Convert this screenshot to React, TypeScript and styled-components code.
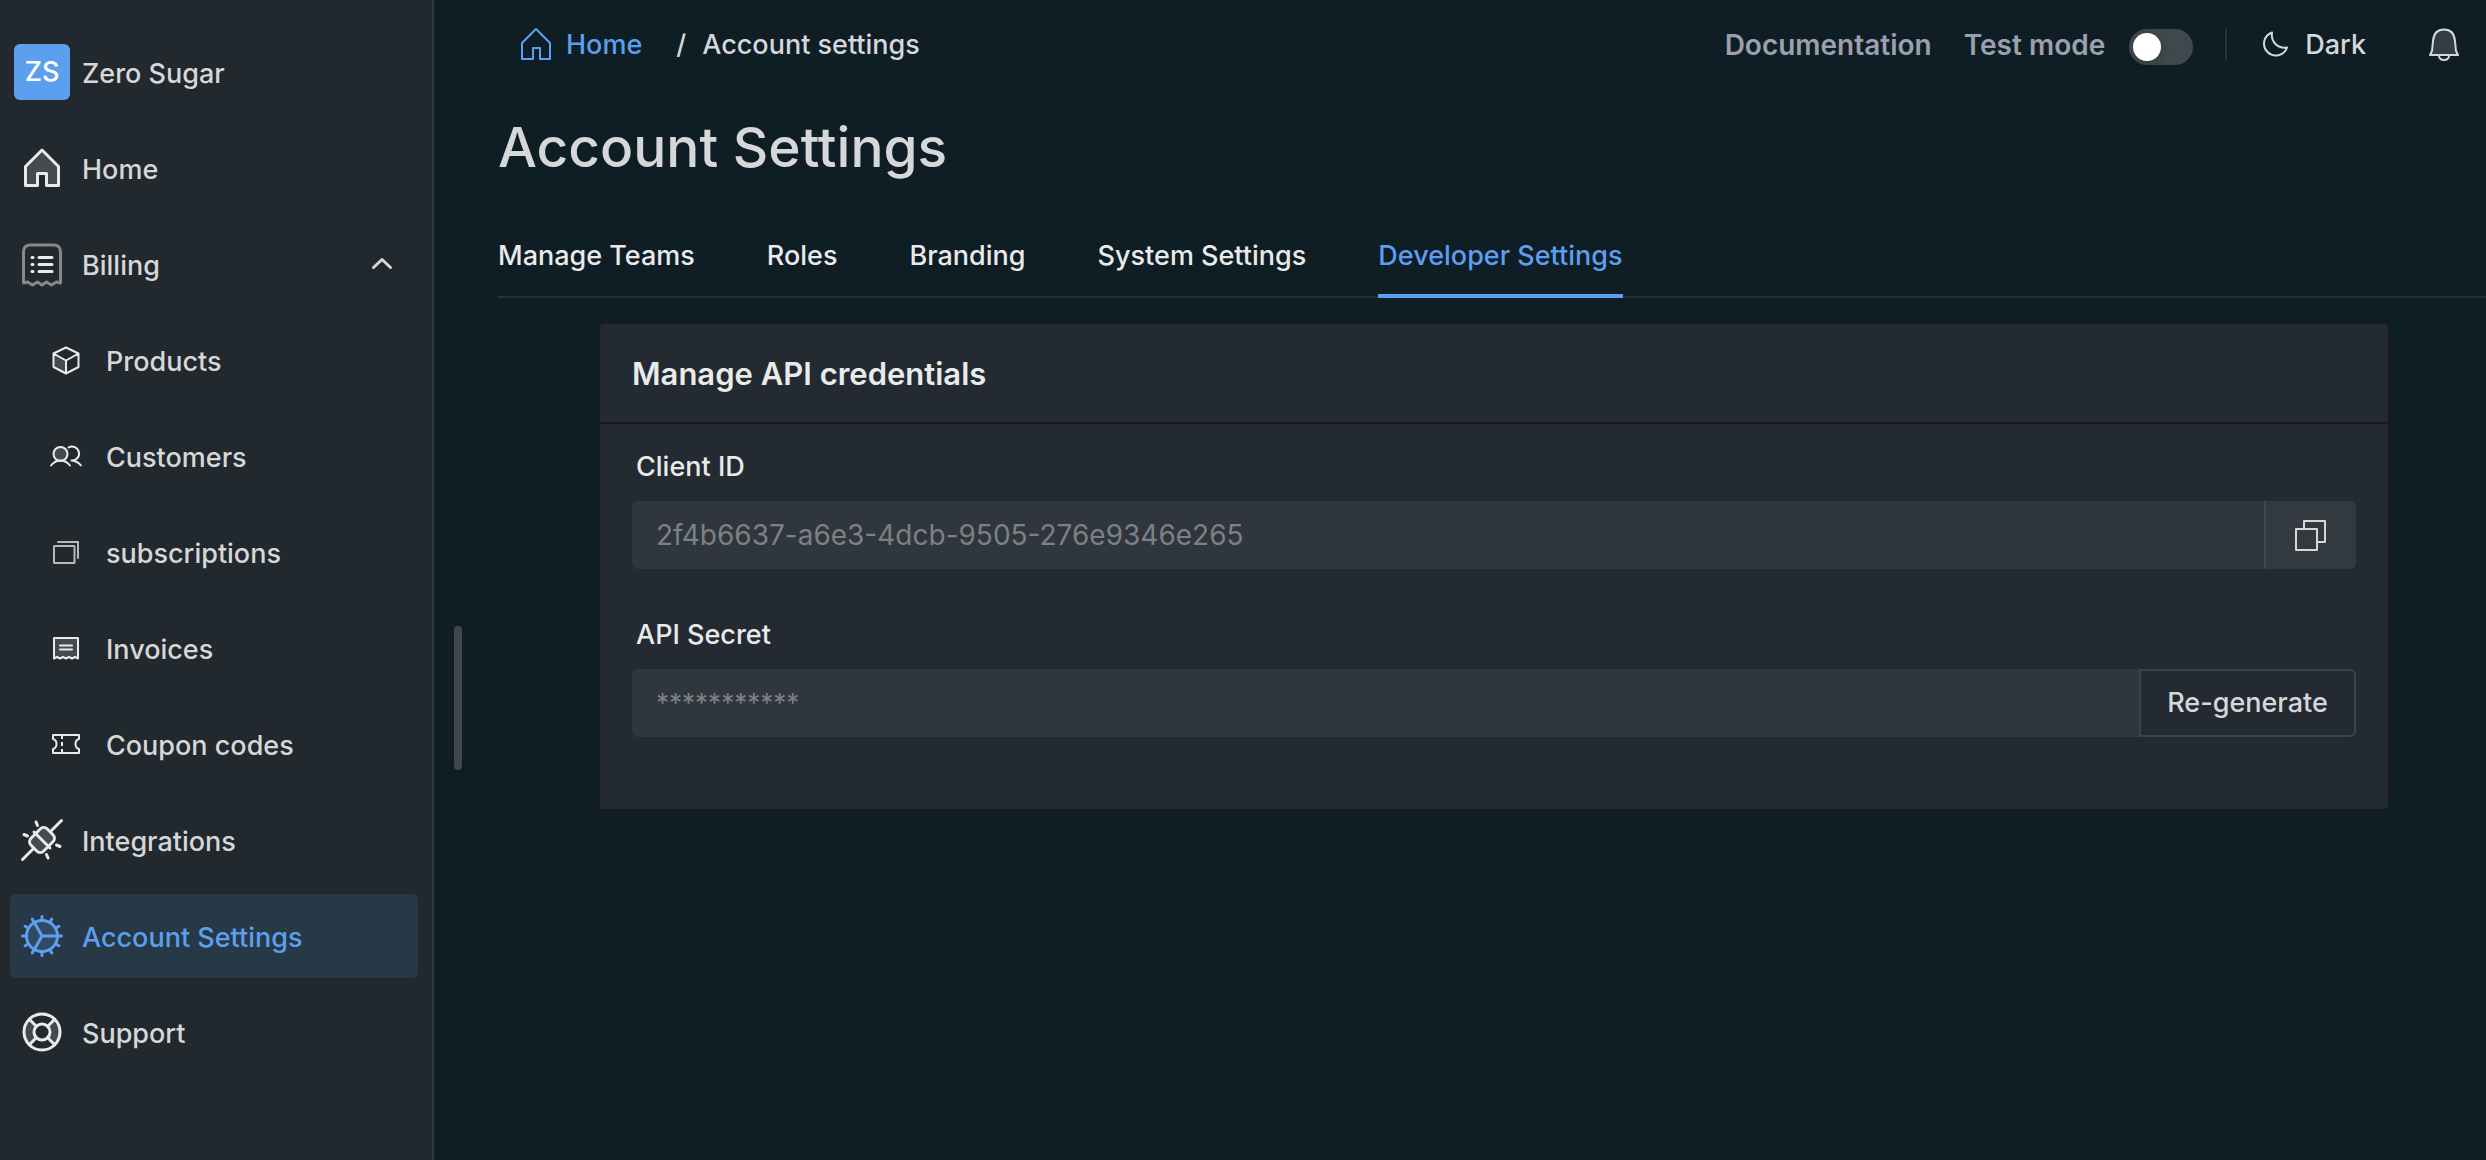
import React, { useState } from "react";
import styled, { createGlobalStyle, css } from "styled-components";

const color = {
  page: "#0f1d24",
  panel: "#21282e",
  panelBorder: "#30373f",
  active: "#273846",
  accent: "#5c9fee",
  text: "#d6d7d8",
  strong: "#e9eaea",
  muted: "#9c9fae",
  card: "#242a32",
  cardBorder: "#17182a",
  field: "#30363d",
  fieldAction: "#32393f",
  fieldText: "#7c8184",
  outline: "#3b4152",
  line: "#273036",
};

const GlobalStyle = createGlobalStyle`
  *, *::before, *::after { box-sizing: border-box; }
  body {
    margin: 0;
    background: ${color.page};
    color: ${color.text};
    font-family: Inter, "Liberation Sans", sans-serif;
    font-size: 27px;
    font-weight: 450;
    line-height: 40px;
  }
  a { color: inherit; text-decoration: none; }
  button, input { font: inherit; color: inherit; margin: 0; }
  ul, ol { list-style: none; margin: 0; padding: 0; }
  svg { display: block; flex: none; }
`;

const Shell = styled.div`
  display: flex;
  min-height: 100vh;
`;

const Sidebar = styled.aside`
  flex: none;
  width: 434px;
  padding: 30px 14px 30px 10px;
  background: ${color.panel};
  border-right: 2px solid ${color.panelBorder};
  display: flex;
  flex-direction: column;
  gap: 12px;
`;

const Brand = styled.div`
  display: flex;
  align-items: center;
  gap: 12px;
  height: 84px;
  padding-left: 4px;
`;

const Avatar = styled.span`
  display: grid;
  place-items: center;
  width: 56px;
  height: 56px;
  border-radius: 6px;
  background: ${color.accent};
  color: #fff;
  font-weight: 500;
`;

const NavList = styled.ul`
  display: flex;
  flex-direction: column;
  gap: 12px;
`;

const navRow = css`
  display: flex;
  align-items: center;
  gap: 16px;
  width: 100%;
  height: 84px;
  border: 0;
  border-radius: 6px;
  background: none;
  text-align: left;
`;

const NavLink = styled.a<{ $nested?: boolean; $active?: boolean }>`
  ${navRow}
  padding: 0 8px 0 ${(p) => (p.$nested ? 32 : 8)}px;
  ${(p) => p.$active && `background: ${color.active}; color: ${color.accent};`}
`;

const NavToggle = styled.button`
  ${navRow}
  padding: 0 24px 0 8px;
  cursor: pointer;
`;

const NavLabel = styled.span`
  flex: 1;
  padding-top: 3px;
`;

const NavIcon = styled.span<{ $active?: boolean }>`
  color: ${(p) => (p.$active ? color.accent : color.strong)};
`;

const ResizeHandle = styled.div`
  position: fixed;
  left: 454px;
  top: 54vh;
  width: 8px;
  height: 144px;
  border-radius: 4px;
  background: #40474c;
`;

const Main = styled.main`
  flex: 1;
  min-width: 0;
`;

const TopBar = styled.header`
  display: flex;
  align-items: center;
  justify-content: space-between;
  height: 89px;
  padding: 0 24px 0 78px;
`;

const Crumbs = styled.ol`
  display: flex;
  align-items: center;
  gap: 16px;
`;

const CrumbLink = styled.a`
  display: flex;
  align-items: center;
  gap: 6px;
  margin-right: 18px;
  color: ${color.accent};
`;

const Tools = styled.div`
  display: flex;
  align-items: center;
  gap: 32px;
`;

const toolText = css`
  color: ${color.muted};
  font-size: 28px;
  font-weight: 600;
`;

const ToolLink = styled.a`
  ${toolText}
`;

const SwitchLabel = styled.label`
  ${toolText}
  display: flex;
  align-items: center;
  gap: 24px;
`;

const Switch = styled.input`
  appearance: none;
  display: flex;
  align-items: center;
  width: 64px;
  height: 36px;
  margin-top: 4px;
  padding: 4px;
  border-radius: 18px;
  background: #40474d;
  cursor: pointer;
  &::before {
    content: "";
    width: 28px;
    height: 28px;
    border-radius: 50%;
    background: #fff;
    box-shadow: 0 4px 8px rgba(0, 35, 11, 0.2);
  }
  &:checked {
    background: ${color.accent};
    justify-content: flex-end;
  }
`;

const Divider = styled.span`
  width: 2px;
  height: 32px;
  background: #2a3339;
`;

const GhostButton = styled.button`
  display: flex;
  align-items: center;
  gap: 14px;
  padding: 0;
  border: 0;
  background: none;
  cursor: pointer;
`;

const BellButton = styled(GhostButton)`
  margin-left: 28px;
`;

const Content = styled.div`
  padding-left: 64px;
`;

const Title = styled.h1`
  margin: 22px 0 53px;
  font-size: 55px;
  line-height: 72px;
  font-weight: 450;
`;

const Tabs = styled.nav`
  display: flex;
  gap: 72px;
  box-shadow: inset 0 -2px ${color.line};
`;

const Tab = styled.a<{ $active?: boolean }>`
  padding-bottom: 18px;
  border-bottom: 4px solid ${(p) => (p.$active ? color.accent : "transparent")};
  color: ${(p) => (p.$active ? color.accent : color.strong)};
`;

const Card = styled.section`
  margin: 24px 96px 0 100px;
  border: 2px solid ${color.cardBorder};
  border-radius: 6px;
  background: ${color.card};
`;

const CardTitle = styled.h2`
  margin: 0;
  padding: 30px 32px 28px;
  border-bottom: 2px solid ${color.cardBorder};
  color: ${color.strong};
  font-size: 31px;
  line-height: 40px;
  font-weight: 600;
`;

const CardBody = styled.div`
  display: flex;
  flex-direction: column;
  gap: 46px;
  padding: 23px 32px 72px;
`;

const FieldLabel = styled.label`
  display: block;
  padding: 0 4px 14px;
  color: ${color.strong};
`;

const InputGroup = styled.div`
  display: flex;
  height: 68px;
`;

const Input = styled.input<{ $masked?: boolean }>`
  flex: 1;
  min-width: 0;
  padding: 0 24px;
  border: 0;
  border-radius: 6px 0 0 6px;
  background: ${color.field};
  color: ${color.fieldText};
  font-size: ${(p) => (p.$masked ? 26 : 28)}px;
  font-weight: 400;
  outline: none;
`;

const CopyButton = styled.button`
  display: grid;
  place-items: center;
  width: 92px;
  padding: 0;
  border: 0;
  border-left: 2px solid #3f464c;
  border-radius: 0 6px 6px 0;
  background: ${color.fieldAction};
  cursor: pointer;
`;

const RegenerateButton = styled.button`
  width: 217px;
  padding: 0;
  border: 2px solid ${color.outline};
  border-radius: 0 6px 6px 0;
  background: ${color.card};
  cursor: pointer;
`;

type IconProps = { size?: number; children: React.ReactNode; stroke?: number };

const Icon = ({ size = 48, stroke = 3, children }: IconProps) => (
  <svg
    width={size}
    height={size}
    viewBox={`0 0 ${size} ${size}`}
    fill="none"
    stroke="currentColor"
    strokeWidth={stroke}
    strokeLinecap="round"
    strokeLinejoin="round"
    aria-hidden="true"
  >
    {children}
  </svg>
);

const tint = { fill: "currentColor", fillOpacity: 0.18 };

const HomeIcon = () => (
  <Icon>
    <path {...tint} d="M24 6 40.500 22.500V41.500H28.500V29.500H19.500V41.500H7.500V22.500Z" />
  </Icon>
);

const BillingIcon = () => (
  <Icon>
    <path
      opacity="0.5"
      d="M5.500 43V12q0-7 7-7h23q7 0 7 7V43L38.500 42 33.500 45 28.500 42 24 45 19.500 42 14.500 45 9.500 42Z"
    />
    <path d="M21 17.500H34M21 24.500H34M21 31.500H34" />
    <path d="M14 17.500H15M14 24.500H15M14 31.500H15" />
  </Icon>
);

const BoxIcon = () => (
  <Icon stroke={2}>
    <path {...tint} stroke="none" d="M11.500 17.500 24 24.500V37.500L11.500 31Z" />
    <path d="M24 11.500 36.500 17.500V31L24 37.500 11.500 31V17.500ZM11.500 17.500 24 24.500 36.500 17.500M24 24.500V37.500" />
  </Icon>
);

const UsersIcon = () => (
  <Icon stroke={2}>
    <circle {...tint} cx="18.500" cy="22" r="7" />
    <path d="M9 33.500Q13 28.500 18.500 28.500T28 33.500" />
    <path d="M26.500 15.500A7 7 0 1 1 29.500 28.500Q35.500 29 39 33.500" />
  </Icon>
);

const StackIcon = () => (
  <Icon stroke={2}>
    <g opacity="0.75">
      <rect x="12" y="18" width="20.500" height="17" rx="0.500" />
      <path d="M16 14H36V30" />
    </g>
  </Icon>
);

const InvoiceIcon = () => (
  <Icon stroke={2}>
    <path
      {...tint}
      d="M12 14H36V34.500L33 33 30 34.500 27 33 24 34.500 21 33 18 34.500 15 33 12 34.500Z"
    />
    <path d="M18 21.500H30M18 25.500H30" />
  </Icon>
);

const TicketIcon = () => (
  <Icon stroke={2}>
    <path d="M11 15H37V19Q33.500 20 33.500 24T37 29V33H11V29Q14.500 28 14.500 24T11 19Z" />
    <path strokeLinecap="butt" strokeDasharray="4 3" d="M20 15V33" />
  </Icon>
);

const PlugIcon = () => (
  <Icon>
    <rect {...tint} x="12.500" y="15" width="23" height="18" rx="5" transform="rotate(-45 24 24)" />
    <path d="M16 16 32 32M33.500 14.500 43.500 4.500M14.500 33.500 4.500 43.500" />
    <path d="M18 6 19.500 9.500M6 18.500 9.500 20M30 42 28.500 38.500M42 30.500 38.500 29" />
  </Icon>
);

const teeth = Array.from({ length: 12 }, (_, i) => i * 30);

const GearIcon = () => (
  <Icon>
    <circle {...tint} cx="24" cy="24" r="15.500" />
    <path d="M24 24H39.500M24 24 16.300 10.600M24 24 16.300 37.400" />
    {teeth.map((angle) => (
      <path key={angle} d="M24 8V4.500" transform={`rotate(${angle} 24 24)`} />
    ))}
  </Icon>
);

const SupportIcon = () => (
  <Icon>
    <path
      {...tint}
      stroke="none"
      d="M11.300 11.300A18 18 0 0 0 11.300 36.700L18.300 29.700A8 8 0 0 1 18.300 18.300ZM36.700 11.300A18 18 0 0 1 36.700 36.700L29.700 29.700A8 8 0 0 0 29.700 18.300Z"
    />
    <circle cx="24" cy="24" r="18" />
    <circle cx="24" cy="24" r="8" />
    <path d="M11.300 11.300 18.300 18.300M36.700 11.300 29.700 18.300M11.300 36.700 18.300 29.700M36.700 36.700 29.700 29.700" />
  </Icon>
);

const ChevronIcon = ({ open }: { open: boolean }) => (
  <Icon size={24}>
    <path d={open ? "M3.500 15.500 12 7.500 20.500 15.500" : "M3.500 8 12 16 20.500 8"} />
  </Icon>
);

const CrumbHomeIcon = () => (
  <Icon size={48} stroke={2}>
    <path d="M24 8 38 22V38H28V27H21V38H10V22Z" />
  </Icon>
);

const MoonIcon = () => (
  <Icon size={32} stroke={2}>
    <path d="M13 3.500A11.800 11.800 0 1 0 28 18.500Q21 19.500 16.500 15T13 3.500Z" />
  </Icon>
);

const BellIcon = () => (
  <Icon size={36} stroke={2}>
    <path {...tint} d="M18 2.500Q28 2.500 29 14L30 24 32 28H4L6 24 7 14Q8 2.500 18 2.500Z" />
    <path d="M13 29.500Q14 33 18 33T23 29.500" />
  </Icon>
);

const CopyIcon = () => (
  <Icon size={32} stroke={2}>
    <path d="M1 10H22V31H1ZM9 10V2H30V23H22" />
  </Icon>
);

const billingItems = [
  { label: "Products", icon: <BoxIcon /> },
  { label: "Customers", icon: <UsersIcon /> },
  { label: "subscriptions", icon: <StackIcon /> },
  { label: "Invoices", icon: <InvoiceIcon /> },
  { label: "Coupon codes", icon: <TicketIcon /> },
];

const tabs = ["Manage Teams", "Roles", "Branding", "System Settings", "Developer Settings"];

type NavItemProps = {
  label: string;
  icon: React.ReactNode;
  nested?: boolean;
  active?: boolean;
};

const NavItem = ({ label, icon, nested, active }: NavItemProps) => (
  <li>
    <NavLink href="#" $nested={nested} $active={active} aria-current={active ? "page" : undefined}>
      <NavIcon $active={active}>{icon}</NavIcon>
      <NavLabel>{label}</NavLabel>
    </NavLink>
  </li>
);

export default function App() {
  const [billingOpen, setBillingOpen] = useState(true);
  const [testMode, setTestMode] = useState(false);

  return (
    <>
      <GlobalStyle />
      <Shell>
        <Sidebar>
          <Brand>
            <Avatar>ZS</Avatar>
            <NavLabel>Zero Sugar</NavLabel>
          </Brand>
          <nav aria-label="Main">
            <NavList>
              <NavItem label="Home" icon={<HomeIcon />} />
              <li>
                <NavToggle
                  type="button"
                  aria-expanded={billingOpen}
                  onClick={() => setBillingOpen(!billingOpen)}
                >
                  <NavIcon>
                    <BillingIcon />
                  </NavIcon>
                  <NavLabel>Billing</NavLabel>
                  <ChevronIcon open={billingOpen} />
                </NavToggle>
              </li>
              {billingOpen && billingItems.map((item) => <NavItem key={item.label} nested {...item} />)}
              <NavItem label="Integrations" icon={<PlugIcon />} />
              <NavItem label="Account Settings" icon={<GearIcon />} active />
              <NavItem label="Support" icon={<SupportIcon />} />
            </NavList>
          </nav>
        </Sidebar>
        <ResizeHandle />
        <Main>
          <TopBar>
            <nav aria-label="Breadcrumb">
              <Crumbs>
                <li>
                  <CrumbLink href="#">
                    <CrumbHomeIcon />
                    Home
                  </CrumbLink>
                </li>
                <li aria-hidden="true">/</li>
                <li>Account settings</li>
              </Crumbs>
            </nav>
            <Tools>
              <ToolLink href="#">Documentation</ToolLink>
              <SwitchLabel>
                Test mode
                <Switch
                  type="checkbox"
                  role="switch"
                  checked={testMode}
                  onChange={(e) => setTestMode(e.target.checked)}
                />
              </SwitchLabel>
              <Divider />
              <GhostButton type="button">
                <MoonIcon />
                Dark
              </GhostButton>
              <BellButton type="button" aria-label="Notifications">
                <BellIcon />
              </BellButton>
            </Tools>
          </TopBar>
          <Content>
            <Title>Account Settings</Title>
            <Tabs aria-label="Settings sections">
              {tabs.map((tab) => (
                <Tab key={tab} href="#" $active={tab === "Developer Settings"}>
                  {tab}
                </Tab>
              ))}
            </Tabs>
            <Card>
              <CardTitle>Manage API credentials</CardTitle>
              <CardBody>
                <div>
                  <FieldLabel htmlFor="client-id">Client ID</FieldLabel>
                  <InputGroup>
                    <Input id="client-id" readOnly value="2f4b6637-a6e3-4dcb-9505-276e9346e265" />
                    <CopyButton type="button" aria-label="Copy client ID">
                      <CopyIcon />
                    </CopyButton>
                  </InputGroup>
                </div>
                <div>
                  <FieldLabel htmlFor="api-secret">API Secret</FieldLabel>
                  <InputGroup>
                    <Input id="api-secret" $masked readOnly value="***********" />
                    <RegenerateButton type="button">Re-generate</RegenerateButton>
                  </InputGroup>
                </div>
              </CardBody>
            </Card>
          </Content>
        </Main>
      </Shell>
    </>
  );
}
